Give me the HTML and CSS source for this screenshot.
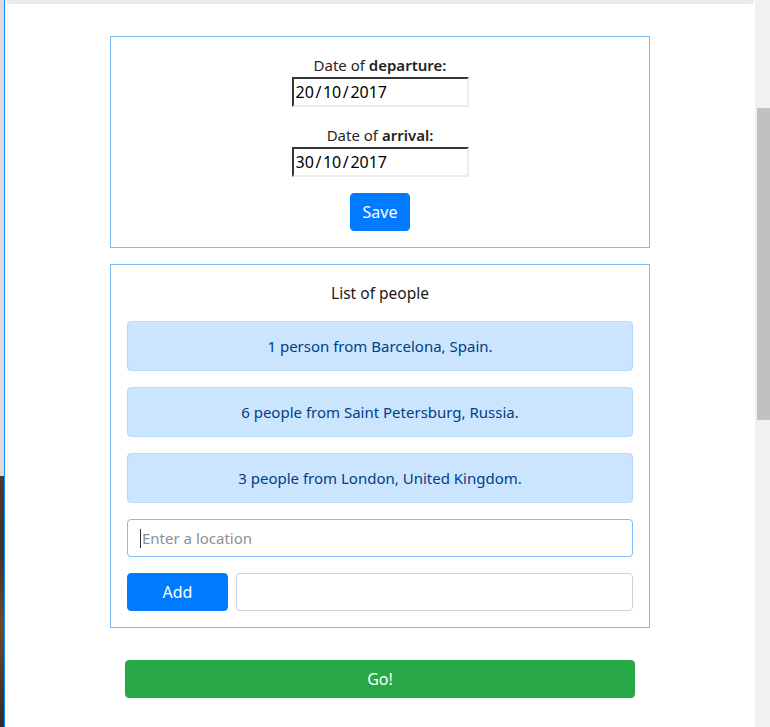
FILE: index.html
```html
<!DOCTYPE html>
<html lang="en">
<head>
<meta charset="utf-8">
<title>Trip planner</title>
<link rel="stylesheet" href="styles.css">
</head>
<body>
<div class="frame">
  <div class="side-strip">
    <div class="side-top"></div>
    <div class="side-photo"></div>
  </div>
  <main class="page">
    <div class="topbar"></div>
    <div class="content">
      <section class="card dates">
        <div class="field">
          <label class="label">Date of <strong>departure:</strong></label>
          <input class="date-input" type="text" value="20&#8202;/&#8202;10&#8202;/&#8202;2017">
        </div>
        <div class="field">
          <label class="label">Date of <strong>arrival:</strong></label>
          <input class="date-input" type="text" value="30&#8202;/&#8202;10&#8202;/&#8202;2017">
        </div>
        <button class="btn btn-primary">Save</button>
      </section>

      <section class="card people">
        <h5 class="card-title">List of people</h5>
        <div class="alert">1 person from Barcelona, Spain.</div>
        <div class="alert">6 people from Saint Petersburg, Russia.</div>
        <div class="alert">3 people from London, United Kingdom.</div>
        <div class="location"><span class="caret"></span><span class="placeholder">Enter a location</span></div>
        <div class="add-row">
          <button class="btn btn-primary btn-add">Add</button>
          <input class="form-control" type="text">
        </div>
      </section>

      <button class="btn btn-go">Go!</button>
    </div>
  </main>
  <div class="scrollbar"><div class="thumb"></div></div>
</div>
</body>
</html>
```

FILE: styles.css
```css
* { box-sizing: border-box; }
html, body { margin: 0; padding: 0; height: 100%; overflow: hidden; }
body {
  font-family: "Noto Sans", "Open Sans", sans-serif;
  font-size: 16px;
  color: #212529;
  background: #fff;
}
.frame { display: flex; height: 727px; }
.side-strip { width: 4px; display: flex; flex-direction: column; }
.side-top { height: 476px; background: #d9dadc; }
.side-photo { flex: 1; background: linear-gradient(180deg, #4a3a2e 0%, #3a3234 30%, #6b4a2a 60%, #2e2a30 100%); }
.page { flex: 1; border-left: 1px solid #1e8bf0; display: flex; flex-direction: column; }
.topbar { height: 4px; margin: 0 1px 0 1px; background: #e9ecef; border-radius: 0 0 3px 3px; }
.content { display: flex; flex-direction: column; align-items: center; padding-top: 32px; }
.card {
  width: 540px;
  border: 1px solid #80bdf2;
  padding: 16px;
  display: flex;
  flex-direction: column;
}
.dates { align-items: center; }
.field { display: flex; flex-direction: column; align-items: center; margin-bottom: 16px; }
.label { line-height: 24px; font-size: 15px; color: #2a2522; }
.label strong { font-weight: 600; color: #1f1f1f; }
.date-input {
  width: 177px; height: 30px;
  font: inherit; font-size: 16px;
  border: 2px inset #ddd;
  border-top-color: #8a8a8a; border-left-color: #8a8a8a;
  border-right-color: #ececec; border-bottom-color: #ececec;
  padding: 0 2px;
  color: #000;
}
.btn {
  font: inherit;
  border: 1px solid transparent;
  border-radius: 4px;
  padding: 6px 12px;
  line-height: 24px;
  color: #fff;
  cursor: pointer;
}
.btn-primary { background: #007bff; border-color: #007bff; }
.people { margin-top: 16px; }
.card-title { margin: 0 0 16px; font-size: 15.5px; font-weight: 400; color: #1a1a1a; line-height: 24px; text-align: center; }
.alert {
  background: #cce5ff;
  border: 1px solid #b8daff;
  color: #004085;
  border-radius: 4px;
  padding: 12px 20px;
  line-height: 24px;
  font-size: 15px;
  text-align: center;
  margin-bottom: 16px;
}
.location {
  height: 38px;
  border: 1px solid #80bdff;
  border-radius: 4px;
  padding: 0 12px;
  display: flex; align-items: center;
  margin-bottom: 16px;
}
.caret { width: 1px; height: 19px; background: #333; margin-right: 1px; }
.placeholder { color: #8a9199; font-size: 15px; }
.add-row { display: flex; gap: 8px; }
.btn-add { width: 101px; }
.form-control {
  flex: 1; height: 38px;
  border: 1px solid #ced4da; border-radius: 4px;
  font: inherit; padding: 6px 12px;
}
.btn-go {
  margin-top: 32px;
  width: 510px;
  background: #28a745; border-color: #28a745;
  font-size: 16px;
}
.scrollbar { width: 15px; background: #f1f1f1; padding: 108px 0 0 2px; }
.thumb { height: 312px; background: #c1c1c1; }
```
